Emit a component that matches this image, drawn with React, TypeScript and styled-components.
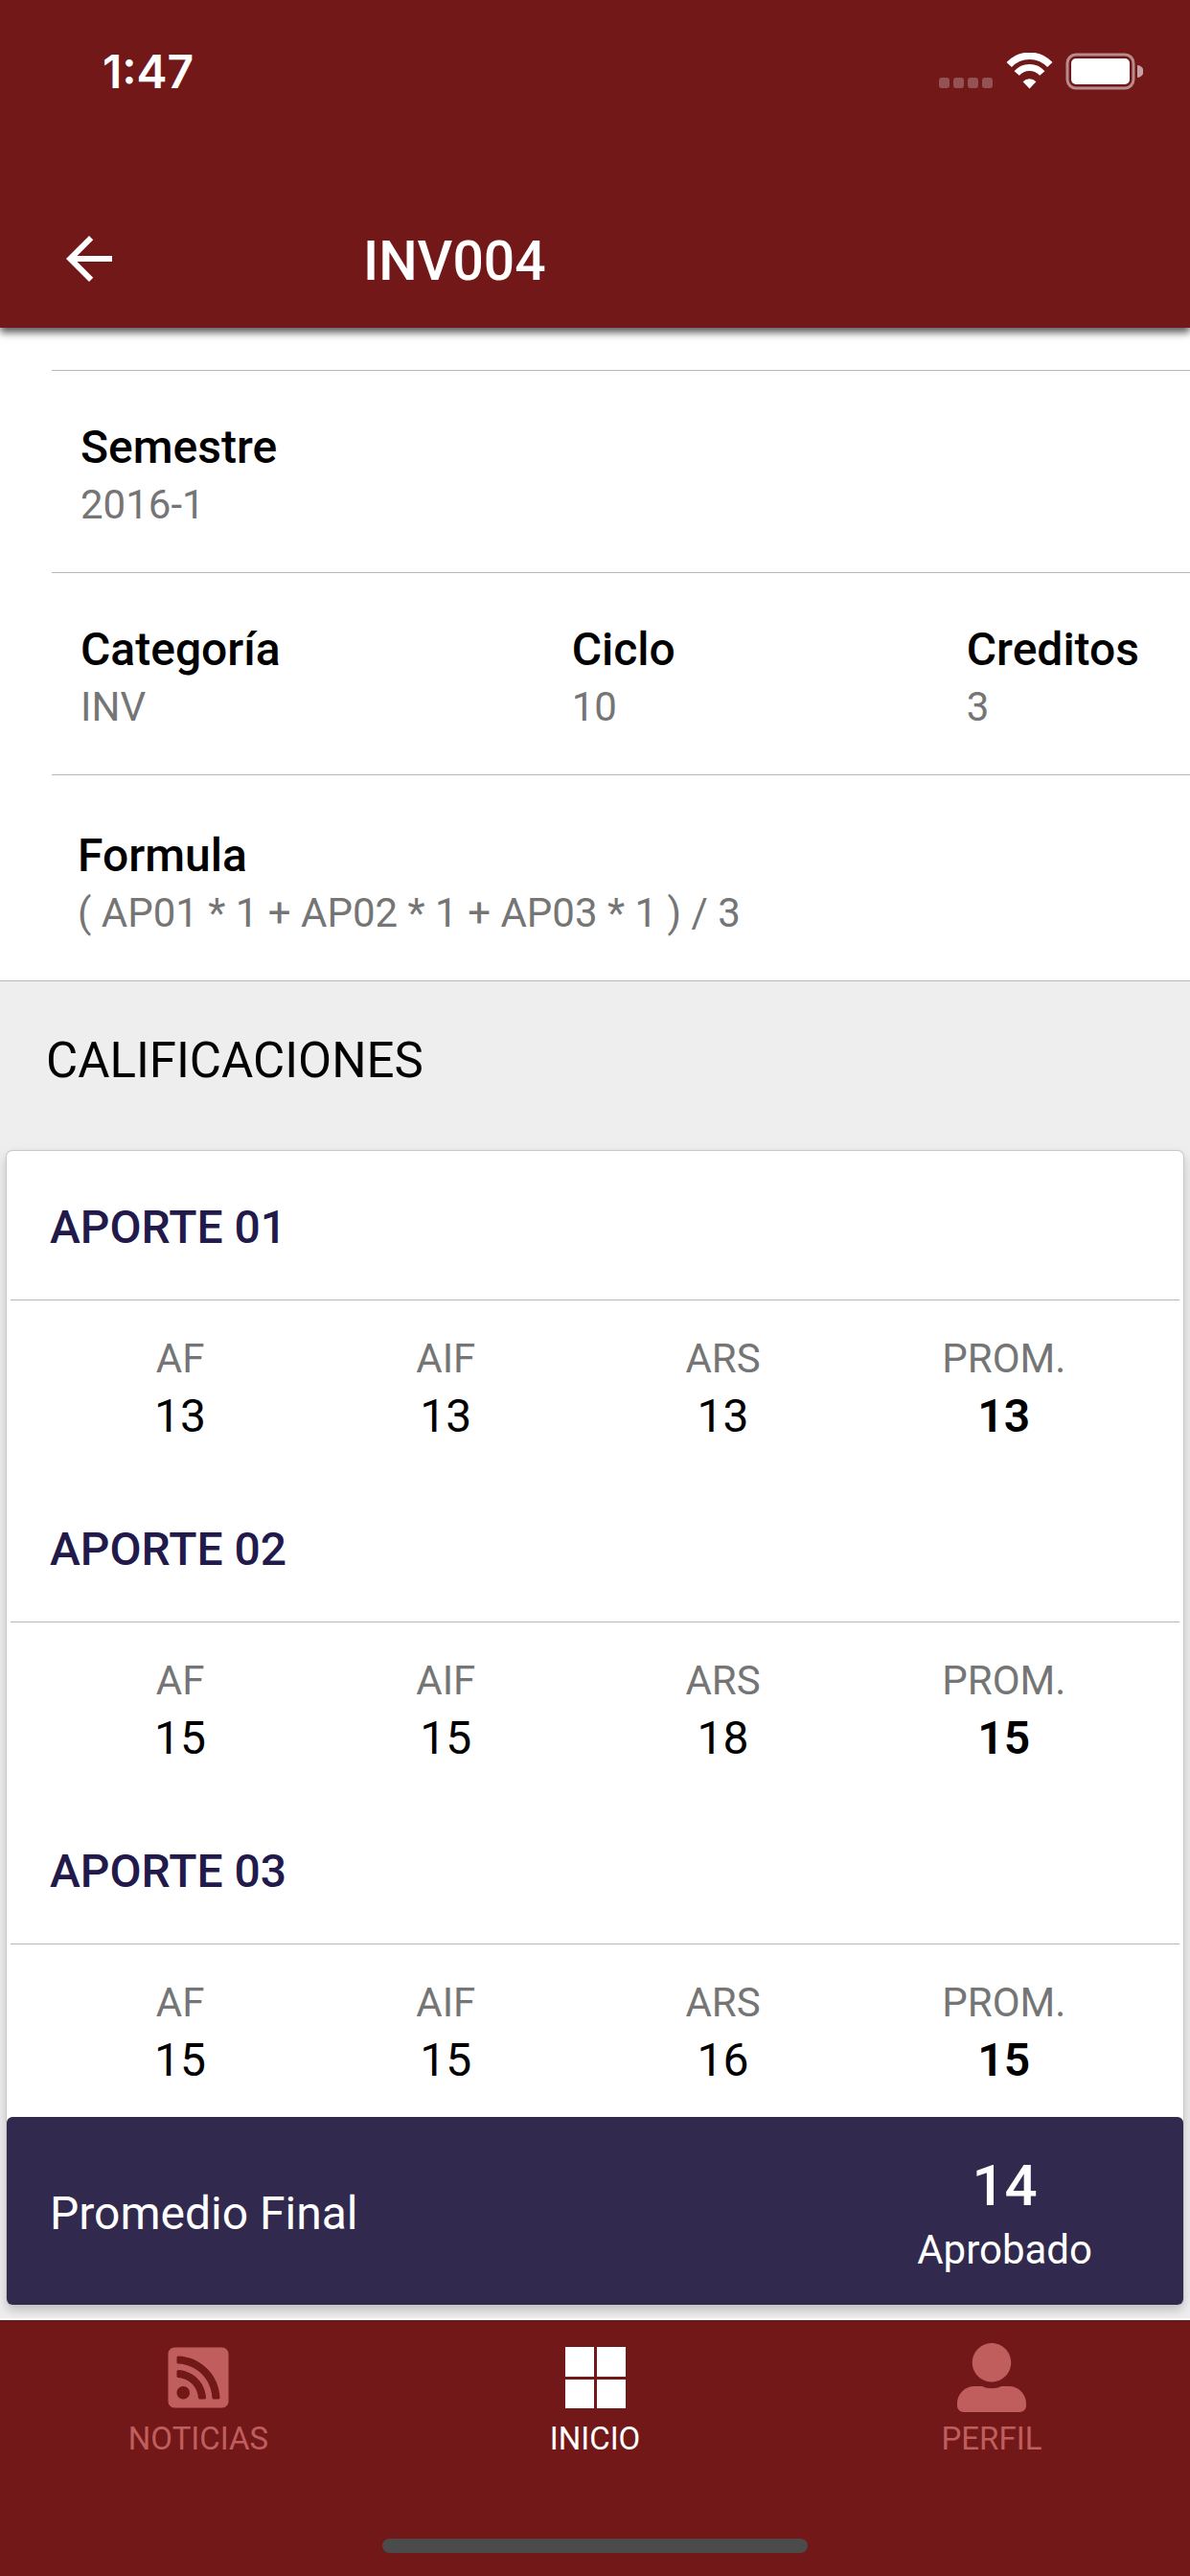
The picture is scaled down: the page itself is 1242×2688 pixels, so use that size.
import React from 'react';
import styled, { createGlobalStyle } from 'styled-components';
import { FaRssSquare, FaUserAlt } from 'react-icons/fa';
import { MdArrowBack } from 'react-icons/md';

const color = {
  brand: '#721818',
  brandMuted: '#c05e5e',
  navy: '#32294e',
  navyText: '#221a4a',
  muted: '#757575',
  line: '#b8b8b8',
  surface: '#eeeeee',
};

const GlobalStyle = createGlobalStyle`
  *, *::before, *::after { box-sizing: border-box; }
  body {
    margin: 0;
    background: #fff;
    color: #000;
    font-family: Roboto, "Noto Sans", sans-serif;
  }
  h1, h2, h3, p, dl, dt, dd { margin: 0; font-weight: 400; }
`;

const Page = styled.div`
  display: flex;
  flex-direction: column;
  min-height: 100vh;
`;

const Header = styled.header`
  position: relative;
  background: ${color.brand};
  color: #fff;
  box-shadow: 0 5px 8px rgba(0, 0, 0, 0.65);
`;

const StatusBar = styled.div`
  display: flex;
  justify-content: space-between;
  padding: 47px 49px 0 107px;
`;

const Clock = styled.span`
  font: 600 48px/56px Inter, Roboto, sans-serif;
`;

const StatusIcons = styled.div`
  display: flex;
  align-items: center;
  height: 56px;
`;

const Toolbar = styled.div`
  display: flex;
  align-items: flex-end;
  gap: 250px;
  padding: 131px 57px 36px;
`;

const BackButton = styled.button`
  display: flex;
  padding: 0;
  border: 0;
  background: none;
  color: inherit;
  font-size: 72px;
  cursor: pointer;
`;

const Title = styled.h1`
  && { font-weight: 500; }
  font-size: 57px;
  line-height: 66px;
`;

const Main = styled.main`
  flex: 1;
  display: flex;
  flex-direction: column;
`;

const Details = styled.dl`
  padding: 44px 0 0 54px;
`;

const DetailRow = styled.div<{ $last?: boolean }>`
  display: flex;
  justify-content: space-between;
  padding: ${(p) => (p.$last ? '56px 53px 45px 27px' : '52px 53px 45px 30px')};
  border-top: 1px solid ${color.line};
`;

const FieldLabel = styled.dt`
  && { font-weight: 500; }
  margin-bottom: 7px;
  font-size: 48px;
  line-height: 56px;
`;

const FieldValue = styled.dd`
  color: ${color.muted};
  font-size: 42px;
  line-height: 50px;
`;

const Grades = styled.section`
  flex: 1;
  padding: 0 7px 14px;
  border-top: 1px solid ${color.line};
  border-bottom: 2px solid #fff;
  background: ${color.surface};
`;

const SectionTitle = styled.h2`
  padding: 53px 41px 64px;
  font-size: 51px;
  line-height: 60px;
`;

const Card = styled.div`
  border-radius: 6px;
  background: #fff;
  box-shadow: 0 0 0 1px #c8c8c8, 0 5px 12px rgba(0, 0, 0, 0.22);
`;

const Partial = styled.section`
  padding: 0 4px 31px;
`;

const PartialTitle = styled.h3`
  && { font-weight: 500; }
  padding: 52px 41px 47px;
  border-bottom: 1px solid ${color.line};
  color: ${color.navyText};
  font-size: 48px;
  line-height: 56px;
`;

const ScoreTable = styled.table`
  width: 100%;
  padding: 36px 40px 0 39px;
  table-layout: fixed;
  border-collapse: separate;
  border-spacing: 0;
  text-align: center;
`;

const ScoreHead = styled.th<{ $width: string }>`
  width: ${(p) => p.$width};
  padding: 0 0 7px;
  color: ${color.muted};
  font-weight: 400;
  font-size: 42px;
  line-height: 50px;
`;

const Score = styled.td<{ $strong?: boolean }>`
  padding: 0;
  font-weight: ${(p) => (p.$strong ? 600 : 400)};
  font-size: 48px;
  line-height: 56px;
`;

const Total = styled.div`
  display: flex;
  align-items: center;
  justify-content: space-between;
  padding: 37px 95px 32px 45px;
  border-radius: 6px;
  background: ${color.navy};
  color: #fff;
`;

const TotalLabel = styled.p`
  font-size: 48px;
  line-height: 56px;
`;

const TotalResult = styled.div`
  text-align: center;
`;

const TotalScore = styled.p`
  && { font-weight: 500; }
  margin-bottom: 7px;
  font-size: 60px;
  line-height: 70px;
`;

const TotalStatus = styled.p`
  font-size: 42px;
  line-height: 50px;
`;

const Footer = styled.footer`
  display: flex;
  flex-direction: column;
  align-items: center;
  padding: 24px 0;
  background: ${color.brand};
`;

const Tabs = styled.nav`
  display: grid;
  grid-template-columns: repeat(3, 1fr);
  width: 100%;
  margin-bottom: 84px;
`;

const Tab = styled.a<{ $active?: boolean }>`
  display: flex;
  flex-direction: column;
  align-items: center;
  gap: 8px;
  color: ${(p) => (p.$active ? '#fff' : color.brandMuted)};
  font-size: 33px;
  line-height: 40px;
  text-decoration: none;

  svg { height: 72px; width: auto; }
`;

const HomeIndicator = styled.div`
  width: 444px;
  max-width: 60%;
  height: 15px;
  border-radius: 8px;
  background: #4b4b4b;
`;

const StatusGlyphs = () => (
  <svg width="213" height="40" viewBox="0 0 213 40" aria-hidden="true">
    <g fill="#fff" opacity="0.25">
      {[0, 15, 30, 45].map((x) => (
        <rect key={x} x={x} y="26" width="11" height="11" rx="3" />
      ))}
    </g>
    <g fill="none" stroke="#fff">
      <path d="M73.2 12.6A29 29 0 0 1 115.8 12.6" strokeWidth="7.4" />
      <path d="M81.2 21.6A17.5 17.5 0 0 1 107.8 21.6" strokeWidth="7" />
    </g>
    <path d="M94.5 37.5 L87.6 30.3 A9.6 9.6 0 0 1 101.4 30.3 Z" fill="#fff" />
    <rect x="134" y="2" width="69" height="35" rx="9" fill="none" stroke="#fff" strokeOpacity="0.5" strokeWidth="3" />
    <rect x="138" y="6" width="61" height="27" rx="5" fill="#fff" />
    <path d="M207 13 A6.5 6.5 0 0 1 207 26 Z" fill="#fff" opacity="0.6" />
  </svg>
);

const TilesIcon = () => (
  <svg viewBox="0 0 63 72" aria-hidden="true" fill="currentColor">
    <path d="M0 4h30v31H0zM33 4h30v31H33zM0 38h30v30H0zM33 38h30v30H33z" />
  </svg>
);

const columns = [
  { name: 'AF', width: '24.2%' },
  { name: 'AIF', width: '24.4%' },
  { name: 'ARS', width: '26.3%' },
  { name: 'PROM.', width: '25.1%' },
];

const partials = [
  { title: 'APORTE 01', scores: [13, 13, 13, 13] },
  { title: 'APORTE 02', scores: [15, 15, 18, 15] },
  { title: 'APORTE 03', scores: [15, 15, 16, 15] },
];

const detailRows = [
  [{ label: 'Semestre', value: '2016-1' }],
  [
    { label: 'Categoría', value: 'INV' },
    { label: 'Ciclo', value: '10' },
    { label: 'Creditos', value: '3' },
  ],
  [{ label: 'Formula', value: '( AP01 * 1 + AP02 * 1 + AP03 * 1 ) / 3' }],
];

export default function App() {
  return (
    <Page>
      <GlobalStyle />
      <Header>
        <StatusBar>
          <Clock>1:47</Clock>
          <StatusIcons>
            <StatusGlyphs />
          </StatusIcons>
        </StatusBar>
        <Toolbar>
          <BackButton type="button" aria-label="Volver">
            <MdArrowBack />
          </BackButton>
          <Title>INV004</Title>
        </Toolbar>
      </Header>

      <Main>
        <Details>
          {detailRows.map((fields, i) => (
            <DetailRow key={fields[0].label} $last={i === detailRows.length - 1}>
              {fields.map((f) => (
                <div key={f.label}>
                  <FieldLabel>{f.label}</FieldLabel>
                  <FieldValue>{f.value}</FieldValue>
                </div>
              ))}
            </DetailRow>
          ))}
        </Details>

        <Grades>
          <SectionTitle>CALIFICACIONES</SectionTitle>
          <Card>
            {partials.map((p) => (
              <Partial key={p.title}>
                <PartialTitle>{p.title}</PartialTitle>
                <ScoreTable aria-label={p.title}>
                  <thead>
                    <tr>
                      {columns.map((c) => (
                        <ScoreHead key={c.name} scope="col" $width={c.width}>
                          {c.name}
                        </ScoreHead>
                      ))}
                    </tr>
                  </thead>
                  <tbody>
                    <tr>
                      {p.scores.map((s, i) => (
                        <Score key={columns[i].name} $strong={i === 3}>
                          {s}
                        </Score>
                      ))}
                    </tr>
                  </tbody>
                </ScoreTable>
              </Partial>
            ))}
            <Total>
              <TotalLabel>Promedio Final</TotalLabel>
              <TotalResult>
                <TotalScore>14</TotalScore>
                <TotalStatus>Aprobado</TotalStatus>
              </TotalResult>
            </Total>
          </Card>
        </Grades>
      </Main>

      <Footer>
        <Tabs>
          <Tab href="#noticias">
            <FaRssSquare />
            NOTICIAS
          </Tab>
          <Tab href="#inicio" $active aria-current="page">
            <TilesIcon />
            INICIO
          </Tab>
          <Tab href="#perfil">
            <FaUserAlt />
            PERFIL
          </Tab>
        </Tabs>
        <HomeIndicator />
      </Footer>
    </Page>
  );
}
